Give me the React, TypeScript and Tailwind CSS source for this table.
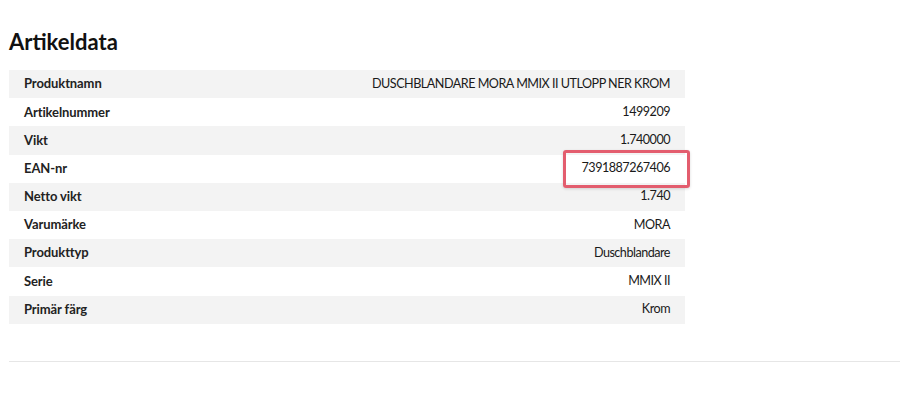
import React from "react";

const rows: [string, string][] = [
  ["Produktnamn", "DUSCHBLANDARE MORA MMIX II UTLOPP NER KROM"],
  ["Artikelnummer", "1499209"],
  ["Vikt", "1.740000"],
  ["EAN-nr", "7391887267406"],
  ["Netto vikt", "1.740"],
  ["Varumärke", "MORA"],
  ["Produkttyp", "Duschblandare"],
  ["Serie", "MMIX II"],
  ["Primär färg", "Krom"],
];

export default function App() {
  return (
    <div
      className="w-[900px] h-[400px] bg-white text-[#222] overflow-hidden"
      style={{ fontFamily: "Lato, 'Open Sans', sans-serif" }}
    >
      <div className="pl-[9px] pt-[28px]">
        <h2 className="text-[22px] font-bold leading-[28px] text-[#111]">Artikeldata</h2>
        <div className="mt-[14px] w-[676px] relative">
          {rows.map(([k, v], i) => (
            <div
              key={k}
              className={`flex items-center justify-between h-[28.2px] px-[15px] ${
                i % 2 === 0 ? "bg-[#f3f3f3]" : "bg-white"
              }`}
            >
              <span className="font-bold text-[13px] tracking-[-0.1px]">{k}</span>
              <span className="text-[12.6px] tracking-[-0.5px] text-[#1a1a1a]">{v}</span>
            </div>
          ))}
          <div className="absolute left-[554px] top-[80px] w-[127px] h-[38px] border-[3px] border-[#e35d6e] rounded-[3px] shadow-[0_1px_3px_rgba(0,0,0,0.15)]" />
        </div>
        <div className="mt-[37px] h-px bg-[#e6e6e6]" />
      </div>
    </div>
  );
}
